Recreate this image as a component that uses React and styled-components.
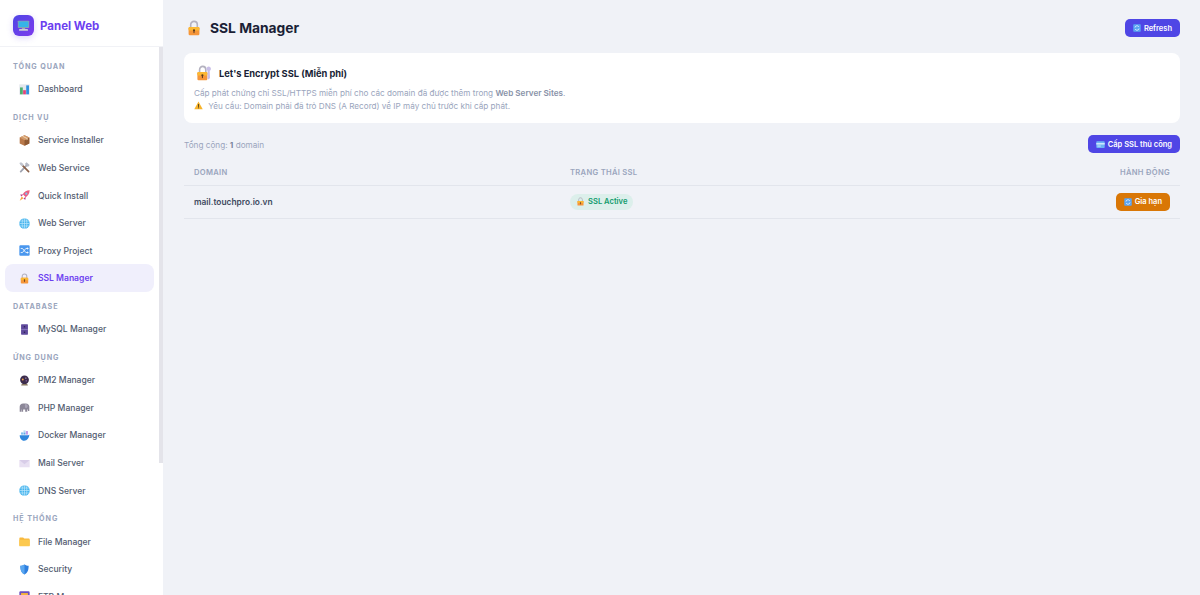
import React from "react";
import styled, { createGlobalStyle } from "styled-components";

const GlobalStyle = createGlobalStyle`
  html, body, #root {
    height: 100%;
    margin: 0;
  }
  body {
    font-family: Inter, "Noto Sans", sans-serif;
    background: #f0f2f7;
    overflow: hidden;
  }
`;

const Layout = styled.div`
  display: flex;
  height: 595px;
  width: 1200px;
  overflow: hidden;
`;

const Sidebar = styled.aside`
  position: relative;
  width: 163px;
  flex-shrink: 0;
  background: #fff;
  display: flex;
  flex-direction: column;
  height: 100%;
`;

const ScrollThumb = styled.div`
  position: absolute;
  top: 47px;
  right: 0;
  width: 4px;
  height: 416px;
  background: #e4e4ea;
`;

const Brand = styled.div`
  height: 47px;
  box-sizing: border-box;
  flex-shrink: 0;
  display: flex;
  align-items: center;
  gap: 6px;
  padding: 5px 0 0 13px;
  border-bottom: 1px solid #f1f2f6;
`;

const BrandLogo = styled.div`
  width: 21px;
  height: 21px;
  border-radius: 6px;
  background: linear-gradient(135deg, #4f46e5, #7c3aed);
  box-shadow: 0 2px 6px rgba(99, 70, 230, 0.22);
  display: flex;
  align-items: center;
  justify-content: center;
`;

const BrandName = styled.span`
  font-size: 11.5px;
  font-weight: 700;
  color: #6d3ff0;
`;

const Nav = styled.nav`
  flex: 1;
  min-height: 0;
  overflow: hidden;
  padding: 5px 9px 0 5px;
  box-sizing: border-box;
`;

const SectionLabel = styled.div`
  height: 23.4px;
  box-sizing: border-box;
  padding: 10px 0 0 8px;
  font-size: 7.2px;
  line-height: 10px;
  font-weight: 700;
  letter-spacing: 0.9px;
  color: #9aa5bd;
`;

const NavItem = styled.div`
  height: 27.6px;
  box-sizing: border-box;
  display: flex;
  align-items: center;
  gap: 8px;
  padding: 0.4px 0 0 14px;
  border-radius: 8px;
  font-size: 8.55px;
  font-weight: ${(p) => (p.$active ? 600 : 500)};
  color: ${(p) => (p.$active ? "#6d3ff0" : "#525c70")};
  background: ${(p) => (p.$active ? "#f0effc" : "transparent")};
`;

const IconSlot = styled.span`
  width: 11px;
  height: 11px;
  flex-shrink: 0;
  display: flex;
  align-items: center;
  justify-content: center;
`;

const Main = styled.main`
  flex: 1;
  min-width: 0;
  padding: 16px 20px 0 21px;
  display: flex;
  flex-direction: column;
`;

const PageHeader = styled.header`
  height: 24px;
  display: flex;
  align-items: center;
  justify-content: space-between;
  margin-bottom: 13px;
`;

const PageTitle = styled.h1`
  margin: 0 0 1px;
  display: flex;
  align-items: center;
  gap: 8px;
  font-size: 13.8px;
  font-weight: 700;
  color: #1a1f36;
  padding-left: 2px;
`;

const Button = styled.button`
  border: none;
  display: inline-flex;
  align-items: center;
  justify-content: center;
  gap: 3px;
  height: 18px;
  padding: 0 8px;
  border-radius: 5px;
  font-family: inherit;
  font-size: 7.5px;
  font-weight: 600;
  color: #fff;
  background: ${(p) => (p.$tone === "warn" ? "#d97706" : "#4f46e5")};
`;

const InfoCard = styled.section`
  height: 70px;
  box-sizing: border-box;
  background: #fff;
  border-radius: 8px;
  padding: 12px 10px 0;
  margin-bottom: 12px;
`;

const InfoTitle = styled.div`
  display: flex;
  align-items: center;
  gap: 7px;
  height: 16px;
  font-size: 9.3px;
  font-weight: 700;
  color: #1a1f36;
  margin-bottom: 5px;
  padding-left: 2px;
`;

const InfoText = styled.p`
  margin: 0;
  display: flex;
  align-items: center;
  gap: 3px;
  height: 13px;
  font-size: 8.17px;
  color: #9aa5bd;
  white-space: pre;
  b {
    font-weight: 600;
    color: #8892a8;
  }
`;

const ListBar = styled.div`
  height: 18px;
  display: flex;
  align-items: center;
  justify-content: space-between;
  margin-bottom: 6px;
`;

const ListCount = styled.div`
  font-size: 8.2px;
  color: #9aa5bd;
  padding-top: 1px;
  b {
    font-weight: 700;
    color: #7a849b;
  }
`;

const Table = styled.table`
  width: 100%;
  border-collapse: collapse;
  table-layout: fixed;
`;

const Th = styled.th`
  height: 26px;
  padding: 2px 10px 0;
  box-sizing: border-box;
  width: ${(p) => p.$width || "auto"};
  font-size: 7.6px;
  font-weight: 600;
  letter-spacing: 0.3px;
  color: #9aa5bd;
  text-align: ${(p) => p.$align || "left"};
  border-bottom: 1px solid #e2e5ec;
`;

const Td = styled.td`
  height: 33px;
  box-sizing: border-box;
  padding: 0 10px;
  font-size: 8.4px;
  font-weight: 600;
  color: #3f4a5f;
  text-align: ${(p) => p.$align || "left"};
  border-bottom: 1px solid #e2e5ec;
`;

const Badge = styled.span`
  display: inline-flex;
  align-items: center;
  gap: 3px;
  height: 16px;
  padding: 0 6px;
  border-radius: 8px;
  background: #dcefeb;
  color: #129b6d;
  font-size: 7.6px;
  font-weight: 600;
`;

function Lock({ size = 11 }) {
  return (
    <svg width={size} height={size} viewBox="0 0 16 16">
      <path d="M4.700 7.500V4.800C4.700 2.900 6.100 1.400 8 1.400s3.300 1.500 3.300 3.400v2.700" fill="none" stroke="#b4b2c0" strokeWidth="1.600" />
      <rect x="2.600" y="7" width="10.800" height="8.200" rx="1.200" fill="#f6963a" />
      <rect x="2.600" y="7" width="10.800" height="3.600" rx="1.200" fill="#fbb833" />
      <circle cx="8" cy="10.300" r="1.100" fill="#5a3a20" />
      <rect x="7.500" y="10.500" width="1" height="2.600" fill="#5a3a20" />
    </svg>
  );
}

function KeyLock({ size }) {
  return (
    <svg width={size} height={size} viewBox="0 0 16 16">
      <path d="M3.600 7.500V4.800C3.600 2.900 4.900 1.400 6.800 1.400s3 1.500 3 3.400v2.700" fill="none" stroke="#b4b2c0" strokeWidth="1.600" />
      <rect x="1.400" y="7" width="10" height="8.200" rx="1.200" fill="#f6963a" />
      <rect x="1.400" y="7" width="10" height="3.600" rx="1.200" fill="#fbb833" />
      <circle cx="6.400" cy="10.300" r="1.100" fill="#5a3a20" />
      <rect x="5.900" y="10.500" width="1" height="2.600" fill="#5a3a20" />
      <path d="M12.600 1.500c1.300 0 2.300 1 2.300 2.200 0 .9-.5 1.600-1.200 2l.3 7.400-1.400 1.400-1-1V5.700c-.7-.4-1.100-1.100-1.100-2 0-1.200 1-2.200 2.100-2.200z" fill="#c9bfe8" />
    </svg>
  );
}

const Monitor = () => (
  <svg width="13" height="13" viewBox="0 0 16 16">
    <rect x="1" y="2" width="14" height="9" rx="0.800" fill="#8ea0ad" />
    <rect x="2" y="3" width="12" height="7" fill="#35b4e8" />
    <rect x="6" y="11" width="4" height="1.600" fill="#a6a8b4" />
    <rect x="2.500" y="12.400" width="11" height="2" rx="0.400" fill="#c9cbd6" />
  </svg>
);

const Chart = () => (
  <svg width="11" height="11" viewBox="0 0 16 16">
    <rect x="0.500" y="0.500" width="15" height="15" fill="#e3e6ec" />
    <rect x="1.500" y="5" width="4" height="10" fill="#4caf6e" />
    <rect x="6" y="9" width="4" height="6" fill="#e2447a" />
    <rect x="10.500" y="2" width="4" height="13" fill="#2f8fe0" />
  </svg>
);

const Box = () => (
  <svg width="11" height="11" viewBox="0 0 16 16">
    <path d="M8 .5l7 3.200v8.600L8 15.500l-7-3.200V3.700z" fill="#b9794a" />
    <path d="M8 7.500l7-3.800v8.600L8 15.500z" fill="#8f5a33" />
    <path d="M1 3.700L8 .5l7 3.200L8 7.500z" fill="#d39a6a" />
    <path d="M4.500 2.200l6.500 3.400v2.200l1.500-.8V4.800L6 1.500z" fill="#ecd2ae" />
  </svg>
);

const Tools = () => (
  <svg width="11" height="11" viewBox="0 0 16 16">
    <path d="M2.500 14L11 5" stroke="#a0a4b0" strokeWidth="2.600" strokeLinecap="round" />
    <path d="M8.500 3l2.500-2.500 4.500 4-2.500 2.800z" fill="#b4b8c4" />
    <path d="M14 14L5 5" stroke="#8a6048" strokeWidth="2.400" strokeLinecap="round" />
    <path d="M6 6L2 4.500.5 1.500 3 .5 6.500 3z" fill="#c0c4ce" />
  </svg>
);

const Rocket = () => (
  <svg width="11" height="11" viewBox="0 0 16 16">
    <path d="M15.500.5c-4.500.2-7.700 2-10 5.600l4.400 4.400c3.600-2.300 5.400-5.500 5.600-10z" fill="#ee5c80" />
    <circle cx="10.600" cy="5.400" r="1.600" fill="#7cc7ef" />
    <path d="M5.800 6L1.500 7l2.500 2.500zM10 10.200L9 14.500 6.500 12z" fill="#b83a8a" />
    <path d="M4 9.500l2.500 2.500-5.500 3.500z" fill="#f7a33b" />
  </svg>
);

const Globe = () => (
  <svg width="11" height="11" viewBox="0 0 16 16">
    <circle cx="8" cy="8" r="7.600" fill="#45b4ee" />
    <g stroke="#c9ecfb" strokeWidth="0.900" fill="none">
      <ellipse cx="8" cy="8" rx="3.400" ry="7.600" />
      <path d="M8 .4v15.200M.4 8h15.200M1.600 4.400h12.800M1.600 11.600h12.800" />
    </g>
  </svg>
);

const Shuffle = () => (
  <svg width="11" height="11" viewBox="0 0 16 16">
    <rect x="0.500" y="0.500" width="15" height="15" rx="1.500" fill="#4a97ee" />
    <path d="M2.500 5h2.500l5 6h3M2.500 11h2.500l5-6h3" fill="none" stroke="#fff" strokeWidth="1.200" />
    <path d="M12 3.200L14.200 5 12 6.800zM12 9.200l2.200 1.800-2.200 1.800z" fill="#fff" />
  </svg>
);

const Database = () => (
  <svg width="11" height="11" viewBox="0 0 16 16">
    <rect x="3" y="0.500" width="10" height="15" rx="0.800" fill="#5f4a9c" />
    <rect x="3" y="7.400" width="10" height="1.200" fill="#8d7cc0" />
    <rect x="7" y="3" width="2" height="2" fill="#2f2558" />
    <rect x="7" y="11" width="2" height="2" fill="#2f2558" />
  </svg>
);

const Ball = () => (
  <svg width="11" height="11" viewBox="0 0 16 16">
    <circle cx="8" cy="7" r="6.400" fill="#3c2c4c" />
    <circle cx="5.500" cy="6.500" r="1.400" fill="#f3a64a" />
    <circle cx="10" cy="4.500" r="0.900" fill="#d7c2e6" />
    <circle cx="10.500" cy="8.500" r="1" fill="#a678c8" />
    <path d="M4 13.200h8l1 2H3z" fill="#8a7a62" />
  </svg>
);

const Elephant = () => (
  <svg width="11" height="11" viewBox="0 0 16 16">
    <path d="M1 14V7c0-3 2-5 5-5h4c3 0 5 2 5 4.500V13h-2v-2h-1v3H9v-3H6v3H3.500v-3H3v3z" fill="#8c8798" />
    <path d="M9 3c2.400 0 3.600 1.400 3.600 3S11 9 9.400 8.600C8.400 7 8.200 4.600 9 3z" fill="#a9a4b6" />
  </svg>
);

const Whale = () => (
  <svg width="11" height="11" viewBox="0 0 16 16">
    <path d="M1 7.500h12.500c1 0 1.200-1 1.500-1 0 4.500-3 9-7.500 9C3.500 15.500 1 11.500 1 7.500z" fill="#2f86dc" />
    <rect x="3" y="3.500" width="3" height="3.200" fill="#7fc0ef" />
    <rect x="6.500" y="3.500" width="3" height="3.200" fill="#5ea9ea" />
    <rect x="6.500" y="0.500" width="3" height="2.600" fill="#b7dcf6" />
    <rect x="10" y="1.500" width="3" height="5.200" fill="#c39be8" />
  </svg>
);

const Mail = () => (
  <svg width="11" height="11" viewBox="0 0 16 16">
    <rect x="0.500" y="3" width="15" height="10.500" fill="#e8e0f2" />
    <path d="M.5 3L8 9l7.500-6" fill="#d8cde8" />
  </svg>
);

const Folder = () => (
  <svg width="11" height="11" viewBox="0 0 16 16">
    <path d="M.5 3.500C.5 2.700 1 2 2 2h4l1.600 1.800h6.400c.8 0 1.500.6 1.500 1.400V13c0 .8-.7 1.500-1.500 1.500H2C1.100 14.500.5 13.800.5 13z" fill="#f9b93e" />
    <rect x="0.500" y="5.500" width="15" height="9.500" rx="1" fill="#fcc94f" />
  </svg>
);

const Shield = () => (
  <svg width="11" height="11" viewBox="0 0 16 16">
    <path d="M8 .6c2 1.300 3.800 1.800 6 2 0 6-1.200 10.300-6 12.800C3.200 12.900 2 8.600 2 2.600c2.200-.2 4-.7 6-2z" fill="#2e7fdf" />
    <path d="M8 .6v14.800C3.200 12.900 2 8.600 2 2.600c2.200-.2 4-.7 6-2z" fill="#5aa7f0" />
  </svg>
);

const Ftp = () => (
  <svg width="11" height="11" viewBox="0 0 16 16">
    <rect x="0.500" y="0.500" width="15" height="15" rx="1.500" fill="#6c4fc0" />
    <rect x="3" y="3" width="10" height="10" fill="#f6b53c" />
  </svg>
);

const Refresh = ({ size = 8 }) => (
  <svg width={size} height={size} viewBox="0 0 16 16">
    <rect x="0.500" y="0.500" width="15" height="15" rx="1.500" fill="#5aa5f2" />
    <path d="M4 7a4 4 0 0 1 7-2l1 1M12 9a4 4 0 0 1-7 2l-1-1" fill="none" stroke="#fff" strokeWidth="1.500" />
  </svg>
);

const Card = () => (
  <svg width="9" height="9" viewBox="0 0 16 16">
    <rect x="0.500" y="2" width="15" height="12" rx="1.500" fill="#6eb4f5" />
    <rect x="0.500" y="5.500" width="15" height="2.500" fill="#d8ecfd" />
    <rect x="2.500" y="10" width="6" height="1.500" fill="#d8ecfd" />
  </svg>
);

const Warning = () => (
  <svg width="9" height="9" viewBox="0 0 16 16">
    <path d="M8 1l7.500 13.500H.5z" fill="#f7b32b" />
    <rect x="7.200" y="5.500" width="1.600" height="5" fill="#4a3a20" />
    <rect x="7.200" y="11.300" width="1.600" height="1.700" fill="#4a3a20" />
  </svg>
);

const MENU = [
  { label: "TỔNG QUAN", items: [{ name: "Dashboard", icon: <Chart /> }] },
  {
    label: "DỊCH VỤ",
    items: [
      { name: "Service Installer", icon: <Box /> },
      { name: "Web Service", icon: <Tools /> },
      { name: "Quick Install", icon: <Rocket /> },
      { name: "Web Server", icon: <Globe /> },
      { name: "Proxy Project", icon: <Shuffle /> },
      { name: "SSL Manager", icon: <Lock />, active: true },
    ],
  },
  { label: "DATABASE", items: [{ name: "MySQL Manager", icon: <Database /> }] },
  {
    label: "ỨNG DỤNG",
    items: [
      { name: "PM2 Manager", icon: <Ball /> },
      { name: "PHP Manager", icon: <Elephant /> },
      { name: "Docker Manager", icon: <Whale /> },
      { name: "Mail Server", icon: <Mail /> },
      { name: "DNS Server", icon: <Globe /> },
    ],
  },
  {
    label: "HỆ THỐNG",
    items: [
      { name: "File Manager", icon: <Folder /> },
      { name: "Security", icon: <Shield /> },
      { name: "FTP Manager", icon: <Ftp /> },
    ],
  },
];

export default function App() {
  return (
    <Layout>
      <GlobalStyle />
      <Sidebar>
        <Brand>
          <BrandLogo>
            <Monitor />
          </BrandLogo>
          <BrandName>Panel Web</BrandName>
        </Brand>
        <Nav>
          {MENU.map((section) => (
            <div key={section.label}>
              <SectionLabel>{section.label}</SectionLabel>
              {section.items.map((item) => (
                <NavItem key={item.name} $active={item.active}>
                  <IconSlot>{item.icon}</IconSlot>
                  {item.name}
                </NavItem>
              ))}
            </div>
          ))}
        </Nav>
        <ScrollThumb />
      </Sidebar>
      <Main>
        <PageHeader>
          <PageTitle>
            <Lock size={16} />
            SSL Manager
          </PageTitle>
          <Button>
            <Refresh />
            Refresh
          </Button>
        </PageHeader>
        <InfoCard>
          <InfoTitle>
            <KeyLock size={16} />
            Let's Encrypt SSL (Miễn phí)
          </InfoTitle>
          <InfoText>
            <span>
              Cấp phát chứng chỉ SSL/HTTPS miễn phí cho các domain đã được thêm trong <b>Web Server Sites</b>.
            </span>
          </InfoText>
          <InfoText>
            <Warning />
            <span> Yêu cầu: Domain phải đã trỏ DNS (A Record) về IP máy chủ trước khi cấp phát.</span>
          </InfoText>
        </InfoCard>
        <ListBar>
          <ListCount>
            Tổng cộng: <b>1</b> domain
          </ListCount>
          <Button>
            <Card />
            Cấp SSL thủ công
          </Button>
        </ListBar>
        <Table>
          <thead>
            <tr>
              <Th $width="376px">DOMAIN</Th>
              <Th>TRẠNG THÁI SSL</Th>
              <Th $align="right">HÀNH ĐỘNG</Th>
            </tr>
          </thead>
          <tbody>
            <tr>
              <Td>mail.touchpro.io.vn</Td>
              <Td>
                <Badge>
                  <Lock size={9} />
                  SSL Active
                </Badge>
              </Td>
              <Td $align="right">
                <Button $tone="warn">
                  <Refresh />
                  Gia hạn
                </Button>
              </Td>
            </tr>
          </tbody>
        </Table>
      </Main>
    </Layout>
  );
}
